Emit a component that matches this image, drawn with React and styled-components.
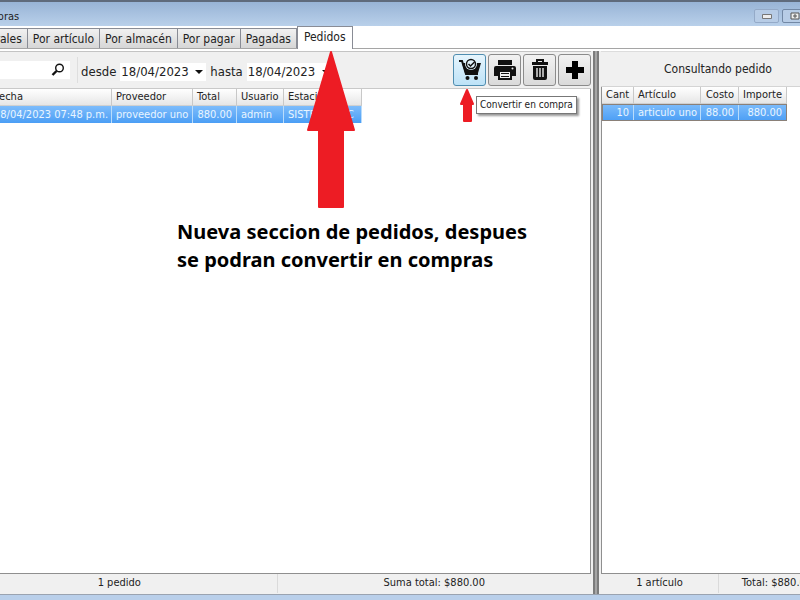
import { useState } from 'react'
import styled, { createGlobalStyle } from 'styled-components'

const GlobalStyle = createGlobalStyle`
    * {
        box-sizing: border-box;
    }
    body {
        margin: 0;
        background: #fff;
        color: #222;
        font-family: "DejaVu Sans Condensed", "Noto Sans", sans-serif;
        font-size: 12px;
    }
    button, input {
        font: inherit;
        color: inherit;
    }
`
const Page = styled.div`
    position: relative;
    height: 100vh;
    overflow: hidden;
`
const Window = styled.div`
    display: flex;
    flex-direction: column;
    height: 100%;
    margin: 0 -35px 0 -38px;
    border-top: 2px solid #5f6b7c;
    border-bottom: 5px solid #b9cfea;
`
const TitleBar = styled.header`
    display: flex;
    justify-content: space-between;
    flex: none;
    height: 24px;
    padding-left: 13px;
    background: linear-gradient(#98b4d6, #b9d0ea);
`
const Title = styled.h1`
    margin: 0;
    font-size: 11px;
    font-weight: normal;
    line-height: 29px;
`
const Controls = styled.div`
    display: flex;
    gap: 3px;
    padding-top: 7px;
`
const Control = styled.button`
    display: flex;
    align-items: center;
    justify-content: center;
    width: 25px;
    height: 14px;
    padding: 0;
    border: 1px solid ${props => props.$strong ? '#7288a5' : '#94aac8'};
    border-radius: 2px;
    background: #b7cce6;
`
const Tabs = styled.nav`
    display: flex;
    align-items: flex-end;
    flex: none;
    height: 23px;
    border-bottom: 1px solid #a5a5a5;
`
const Tab = styled.button`
    height: ${props => props.$active ? '23px' : '20px'};
    margin-bottom: ${props => props.$active ? '-1px' : '0'};
    padding: ${props => props.$active ? '0 6px 2px' : '1px 5px 0'};
    border: 1px solid #898c95;
    border-bottom: 0;
    border-left-width: ${props => props.$active ? '1px' : '0'};
    background: ${props => props.$active ? '#fff' : 'linear-gradient(#f1f1f1, #d6d6d6)'};
    font-size: 12px;
    white-space: nowrap;
`
const Panes = styled.main`
    display: grid;
    grid-template-columns: minmax(0, 1fr) 6px 236px;
    flex: 1;
    min-height: 0;
    margin-top: 2px;
    border-bottom: 1px solid #9aa3b0;
`
const Pane = styled.section`
    display: flex;
    flex-direction: column;
    min-width: 0;
    padding: ${props => props.$side ? '0 0 1px 2px' : '0 2px 1px 0'};
    background: #f0f0f0;
`
const Splitter = styled.div`
    border: solid #7c7c7c;
    border-width: 0 2px;
    background: #a6a6a6;
`
const Toolbar = styled.div`
    display: flex;
    align-items: center;
    height: 38px;
    border-top: 1px solid #c4c4c4;
    border-bottom: 1px solid #c9c9c9;
`
const Search = styled.label`
    display: flex;
    align-items: center;
    width: 108px;
    height: 18px;
    padding-right: 5px;
    background: #fff;

    input {
        flex: 1;
        min-width: 0;
        border: 0;
        outline: 0;
        background: none;
    }
`
const Dates = styled.div`
    display: flex;
    align-items: center;
    gap: 4px;
    height: 26px;
    margin-left: 7px;
    padding: 3px 0 0 3px;
    border-left: 1px solid #dedede;
    font-size: 13px;
`
const DateField = styled.div`
    display: flex;
    align-items: center;
    width: 86px;
    height: 18px;
    background: #fff;

    input {
        width: 72px;
        padding: 0 0 0 1px;
        border: 0;
        outline: 0;
        background: none;
    }
    button {
        display: flex;
        padding: 0 3px;
        border: 0;
        background: none;
    }
`
const Actions = styled.div`
    display: flex;
    gap: 2px;
    margin-left: auto;
`
const Action = styled.button`
    display: flex;
    align-items: center;
    justify-content: center;
    width: 33px;
    height: 32px;
    padding: 0;
    border: 1px solid ${props => props.$hover ? '#4f8db0' : '#8b8b8b'};
    border-radius: 3px;
    background: ${props => props.$hover
        ? 'linear-gradient(#e6f5fd, #bde2f7)'
        : 'linear-gradient(#f2f2f2, #dadada)'};
`
const PaneTitle = styled.h2`
    height: 36px;
    margin: 0;
    border-top: 1px solid #dcdcdc;
    border-bottom: 1px solid #d4d4d4;
    font-size: 12px;
    font-weight: normal;
    line-height: 34px;
    text-align: center;
`
const List = styled.div`
    flex: 1;
    min-height: 0;
    overflow: hidden;
    border: solid #8f8f8f;
    border-width: 0 1px 1px;
    background: #fff;
`
const Table = styled.table`
    table-layout: fixed;
    width: ${props => props.$width}px;
    border-collapse: separate;
    border-spacing: 0;
    font-size: 11px;
    white-space: nowrap;

    th, td {
        height: 17px;
        padding: 0 4px;
        overflow: hidden;
        line-height: 16px;
        text-align: left;
    }
    th {
        border-right: 1px solid #c8c8c8;
        border-bottom: 1px solid #d0d0d0;
        background: linear-gradient(#fff, #e6e6e6);
        font-weight: normal;
    }
    td {
        border-right: 1px solid #b9dcfb;
        background: linear-gradient(#7dbcfb, #4b9ef5);
        color: #e9f5ff;
    }
    tbody tr {
        outline: ${props => props.$focused ? '1px solid #8a8078' : 'none'};
        outline-offset: -1px;
    }
    .num {
        text-align: right;
    }
`
const Status = styled.footer`
    display: grid;
    grid-template-columns: 1fr 1fr;
    height: 19px;
    font-size: 11px;
    line-height: 18px;
    text-align: center;

    span + span {
        border-left: 1px solid #dadada;
    }
`
const Tooltip = styled.div`
    position: absolute;
    top: 96px;
    left: 476px;
    padding: 0 3px;
    border: 1px solid #777;
    background: #fff;
    box-shadow: 2px 2px 2px #999;
    font-size: 10px;
    line-height: 16px;
    white-space: nowrap;
`
const Arrow = styled.svg`
    position: absolute;
    top: ${props => props.$top}px;
    left: ${props => props.$left}px;
    fill: #ed1c24;
    stroke: #ed1c24;
    stroke-width: 2;
    stroke-linejoin: round;
`
const Note = styled.p`
    position: absolute;
    top: 218px;
    left: 177px;
    margin: 0;
    color: #000;
    font-family: "Noto Sans", "Open Sans", sans-serif;
    font-size: 20px;
    font-weight: bold;
    line-height: 28px;
    white-space: nowrap;
`

function SearchIcon() {
    return (
        <svg width="14" height="14" viewBox="0 0 14 14" fill="none" stroke="#111">
            <circle cx="8.5" cy="5" r="3.8" strokeWidth="1.4" />
            <path d="M5.5 8L1.5 12" strokeWidth="2.4" />
        </svg>
    )
}

function CartIcon() {
    return (
        <svg width="24" height="24" viewBox="0 0 24 24">
            <path d="M1 3h3l4 13h12" fill="none" stroke="#111" strokeWidth="2" />
            <path d="M4 5h19l-3 10H7z" fill="#111" />
            <circle cx="13" cy="6" r="6" fill="#e3f3fc" />
            <circle cx="13" cy="6" r="4.5" fill="#e3f3fc" stroke="#111" strokeWidth="1.4" />
            <path d="M10.5 6l2 2 4-4" fill="none" stroke="#111" strokeWidth="1.5" />
            <circle cx="9.5" cy="20" r="2" fill="#111" />
            <circle cx="18" cy="20" r="2" fill="#111" />
        </svg>
    )
}

function PrinterIcon() {
    return (
        <svg width="24" height="24" viewBox="0 0 24 24" fill="#111">
            <path d="M5 2h14v5H5z" />
            <path d="M3 8h18a2 2 0 0 1 2 2v8h-4v-4H5v4H1v-8a2 2 0 0 1 2-2z" />
            <path d="M6 13h12v8H6z" fill="#eee" stroke="#111" strokeWidth="2" />
            <path d="M8 15h8v1H8zM8 18h8v1H8z" />
            <circle cx="19.5" cy="10.5" r="1" fill="#eee" />
        </svg>
    )
}

function TrashIcon() {
    return (
        <svg width="24" height="24" viewBox="0 0 24 24">
            <path d="M9 4V2h6v2" fill="none" stroke="#111" strokeWidth="2" />
            <path d="M4 4h16v3H4zM5 8h14v12a2 2 0 0 1-2 2H7a2 2 0 0 1-2-2z" fill="#111" />
            <path d="M9 10v9M12 10v9M15 10v9" stroke="#ddd" strokeWidth="1.5" />
        </svg>
    )
}

function PlusIcon() {
    return (
        <svg width="20" height="20" viewBox="0 0 20 20" fill="#000">
            <path d="M7 1h6v6h6v6h-6v6H7v-6H1V7h6z" />
        </svg>
    )
}

function DatePicker({ id }) {
    const [fecha, setFecha] = useState('18/04/2023')

    return (
        <DateField>
            <input id={id} value={fecha} onChange={e => setFecha(e.target.value)} />
            <button type="button" aria-label="Abrir calendario">
                <svg width="8" height="4" viewBox="0 0 8 4"><path d="M0 0h8L4 4z" fill="#111" /></svg>
            </button>
        </DateField>
    )
}

const tabs = ['Generales', 'Por artículo', 'Por almacén', 'Por pagar', 'Pagadas', 'Pedidos']

function App() {
    const [tab, setTab] = useState('Pedidos')

    return (
        <Page>
            <GlobalStyle />
            <Window>
                <TitleBar>
                    <Title>Compras</Title>
                    <Controls>
                        <Control aria-label="Minimizar">
                            <svg width="10" height="5"><path d="M.5.5h9v4h-9z" fill="#eee" stroke="#777" /></svg>
                        </Control>
                        <Control $strong aria-label="Restaurar">
                            <svg width="10" height="8"><path d="M1 1h8v6H1zM4 3h2v2H4z" fill="#eee" stroke="#555" /></svg>
                        </Control>
                        <Control $strong aria-label="Cerrar" />
                    </Controls>
                </TitleBar>
                <Tabs>
                    {tabs.map(nombre => (
                        <Tab key={nombre} $active={nombre === tab} onClick={() => setTab(nombre)}>
                            {nombre}
                        </Tab>
                    ))}
                </Tabs>
                <Panes>
                    <Pane>
                        <Toolbar>
                            <Search>
                                <input aria-label="Buscar" />
                                <SearchIcon />
                            </Search>
                            <Dates>
                                <label htmlFor="desde">desde</label>
                                <DatePicker id="desde" />
                                <label htmlFor="hasta">hasta</label>
                                <DatePicker id="hasta" />
                            </Dates>
                            <Actions>
                                <Action $hover aria-label="Convertir en compra"><CartIcon /></Action>
                                <Action aria-label="Imprimir"><PrinterIcon /></Action>
                                <Action aria-label="Eliminar"><TrashIcon /></Action>
                                <Action aria-label="Agregar"><PlusIcon /></Action>
                            </Actions>
                        </Toolbar>
                        <List>
                            <Table $width={399}>
                                <colgroup>
                                    <col width="27" />
                                    <col width="122" />
                                    <col width="81" />
                                    <col width="44" />
                                    <col width="47" />
                                    <col width="78" />
                                </colgroup>
                                <thead>
                                    <tr>
                                        <th />
                                        <th>Fecha</th>
                                        <th>Proveedor</th>
                                        <th>Total</th>
                                        <th>Usuario</th>
                                        <th>Estación</th>
                                    </tr>
                                </thead>
                                <tbody>
                                    <tr>
                                        <td />
                                        <td>18/04/2023 07:48 p.m.</td>
                                        <td>proveedor uno</td>
                                        <td className="num">880.00</td>
                                        <td>admin</td>
                                        <td>SISTEMAS-PC</td>
                                    </tr>
                                </tbody>
                            </Table>
                        </List>
                        <Status>
                            <span>1 pedido</span>
                            <span>Suma total: $880.00</span>
                        </Status>
                    </Pane>
                    <Splitter />
                    <Pane $side>
                        <PaneTitle>Consultando pedido</PaneTitle>
                        <List>
                            <Table $width={185} $focused>
                                <colgroup>
                                    <col width="32" />
                                    <col width="67" />
                                    <col width="38" />
                                    <col width="48" />
                                </colgroup>
                                <thead>
                                    <tr>
                                        <th className="num">Cant</th>
                                        <th>Artículo</th>
                                        <th className="num">Costo</th>
                                        <th className="num">Importe</th>
                                    </tr>
                                </thead>
                                <tbody>
                                    <tr>
                                        <td className="num">10</td>
                                        <td>articulo uno</td>
                                        <td className="num">88.00</td>
                                        <td className="num">880.00</td>
                                    </tr>
                                </tbody>
                            </Table>
                        </List>
                        <Status>
                            <span>1 artículo</span>
                            <span>Total: $880.00</span>
                        </Status>
                    </Pane>
                </Panes>
            </Window>
            <Tooltip role="tooltip">Convertir en compra</Tooltip>
            <Arrow $top={50} $left={306} width="50" height="160">
                <path d="M25 2L48 80H37V157H13V80H2z" />
            </Arrow>
            <Arrow $top={88} $left={459} width="17" height="36">
                <path d="M8 2L14 16H12V33H5V16H2z" />
            </Arrow>
            <Note>Nueva seccion de pedidos, despues<br />se podran convertir en compras</Note>
        </Page>
    )
}

export default App
